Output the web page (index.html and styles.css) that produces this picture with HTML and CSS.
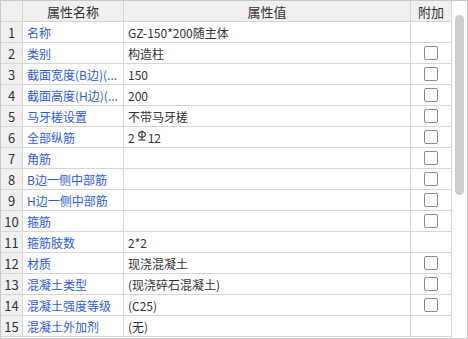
FILE: index.html
```html
<!DOCTYPE html>
<html>
  <head>
    <meta charset="utf-8">
    <link rel="stylesheet" href="styles.css">
  </head>
  <body>
    <div class="prop-grid">
      <div class="grid-body">
        <div class="row header-row">
          <div class="cell num-cell"></div>
          <div class="cell head-cell">属性名称</div>
          <div class="cell head-cell">属性值</div>
          <div class="cell head-cell">附加</div>
        </div>

        <div class="row">
          <div class="cell num-cell">1</div>
          <div class="cell name-cell">名称</div>
          <div class="cell value-cell">GZ-150*200随主体</div>
          <div class="cell add-cell"></div>
        </div>
        <div class="row">
          <div class="cell num-cell">2</div>
          <div class="cell name-cell">类别</div>
          <div class="cell value-cell">构造柱</div>
          <div class="cell add-cell"><span class="check"></span></div>
        </div>
        <div class="row">
          <div class="cell num-cell">3</div>
          <div class="cell name-cell">截面宽度(B边)(...</div>
          <div class="cell value-cell">150</div>
          <div class="cell add-cell"><span class="check"></span></div>
        </div>
        <div class="row">
          <div class="cell num-cell">4</div>
          <div class="cell name-cell">截面高度(H边)(...</div>
          <div class="cell value-cell">200</div>
          <div class="cell add-cell"><span class="check"></span></div>
        </div>
        <div class="row">
          <div class="cell num-cell">5</div>
          <div class="cell name-cell">马牙槎设置</div>
          <div class="cell value-cell">不带马牙槎</div>
          <div class="cell add-cell"><span class="check"></span></div>
        </div>
        <div class="row">
          <div class="cell num-cell">6</div>
          <div class="cell name-cell">全部纵筋</div>
          <div class="cell value-cell">2<svg class="bar-mark" width="10" height="12" viewBox="0 0 10 12"><ellipse cx="5" cy="4.5" rx="3.3" ry="2.6" fill="none" stroke="#333" stroke-width="1.1"/><line x1="5" y1="0.5" x2="5" y2="10" stroke="#333" stroke-width="1.1"/><line x1="1.5" y1="10" x2="8.5" y2="10" stroke="#333" stroke-width="1.1"/></svg>12</div>
          <div class="cell add-cell"><span class="check"></span></div>
        </div>
        <div class="row">
          <div class="cell num-cell">7</div>
          <div class="cell name-cell">角筋</div>
          <div class="cell value-cell"></div>
          <div class="cell add-cell"><span class="check"></span></div>
        </div>
        <div class="row">
          <div class="cell num-cell">8</div>
          <div class="cell name-cell">B边一侧中部筋</div>
          <div class="cell value-cell"></div>
          <div class="cell add-cell"><span class="check"></span></div>
        </div>
        <div class="row">
          <div class="cell num-cell">9</div>
          <div class="cell name-cell">H边一侧中部筋</div>
          <div class="cell value-cell"></div>
          <div class="cell add-cell"><span class="check"></span></div>
        </div>
        <div class="row">
          <div class="cell num-cell">10</div>
          <div class="cell name-cell">箍筋</div>
          <div class="cell value-cell"></div>
          <div class="cell add-cell"><span class="check"></span></div>
        </div>
        <div class="row">
          <div class="cell num-cell">11</div>
          <div class="cell name-cell">箍筋肢数</div>
          <div class="cell value-cell">2*2</div>
          <div class="cell add-cell"></div>
        </div>
        <div class="row">
          <div class="cell num-cell">12</div>
          <div class="cell name-cell">材质</div>
          <div class="cell value-cell">现浇混凝土</div>
          <div class="cell add-cell"><span class="check"></span></div>
        </div>
        <div class="row">
          <div class="cell num-cell">13</div>
          <div class="cell name-cell">混凝土类型</div>
          <div class="cell value-cell">(现浇碎石混凝土)</div>
          <div class="cell add-cell"><span class="check"></span></div>
        </div>
        <div class="row">
          <div class="cell num-cell">14</div>
          <div class="cell name-cell">混凝土强度等级</div>
          <div class="cell value-cell">(C25)</div>
          <div class="cell add-cell"><span class="check"></span></div>
        </div>
        <div class="row">
          <div class="cell num-cell">15</div>
          <div class="cell name-cell">混凝土外加剂</div>
          <div class="cell value-cell">(无)</div>
          <div class="cell add-cell"></div>
        </div>
      </div>

      <div class="scroll-track">
        <div class="scroll-thumb"></div>
      </div>
    </div>
  </body>
</html>
```

FILE: styles.css
```css
* {
  box-sizing: border-box;
}

body {
  margin: 0;
  font-family: "Noto Sans CJK SC", "Liberation Sans", sans-serif;
  font-size: 12px;
  color: #333;
  background-color: #fff;
}

.prop-grid {
  display: flex;
  width: 468px;
  height: 339px;
  border: 1px solid #c9c9c9;
  overflow: hidden;
}

.grid-body {
  width: 451px;
  border-right: 1px solid #d6d6d6;
}

.row {
  display: grid;
  grid-template-columns: 22px 101px 287px 40px;
  height: 21px;
  border-bottom: 1px solid #d6d6d6;
}

.cell {
  display: flex;
  align-items: center;
  border-right: 1px solid #d6d6d6;
  white-space: nowrap;
  overflow: hidden;
}

.cell:last-child {
  border-right: none;
}

.header-row {
  background-color: #f0f0f0;
}

.head-cell {
  justify-content: center;
  font-size: 13px;
  color: #333;
}

.num-cell {
  justify-content: center;
  background-color: #f0f0f0;
  font-size: 13px;
  color: #333;
}

.name-cell {
  padding: 0 4px;
  color: #2d5ce6;
}

.value-cell {
  padding: 0 4px;
}

.bar-mark {
  margin: 0 1px 3px 2px;
}

.add-cell {
  justify-content: center;
}

.check {
  width: 14px;
  height: 14px;
  border: 1px solid #8a8a8a;
  border-radius: 2px;
  background-color: #fff;
}

.scroll-track {
  flex: 1;
  position: relative;
  background-color: #fff;
}

.scroll-thumb {
  position: absolute;
  top: 14px;
  left: 3px;
  width: 9px;
  height: 180px;
  border-radius: 5px;
  background-color: #cdcdcd;
}
```
